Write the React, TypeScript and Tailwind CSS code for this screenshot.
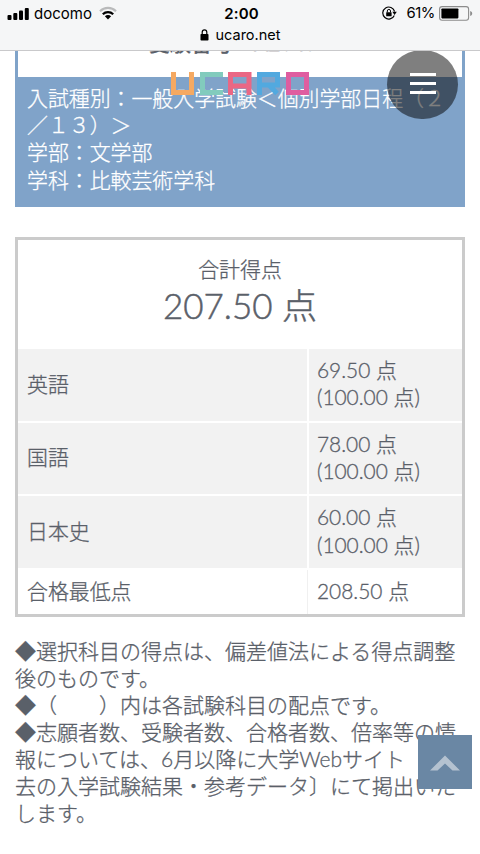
const scores = [
  { subject: "英語", score: "69.50 点", full: "(100.00 点)" },
  { subject: "国語", score: "78.00 点", full: "(100.00 点)" },
  { subject: "日本史", score: "60.00 点", full: "(100.00 点)" },
];

const examInfo = [
  "入試種別：一般入学試験＜個別学部日程（２",
  "／１３）＞",
  "学部：文学部",
  "学科：比較芸術学科",
];

const notes = [
  "◆選択科目の得点は、偏差値法による得点調整",
  "後のものです。",
  "◆（　　）内は各試験科目の配点です。",
  "◆志願者数、受験者数、合格者数、倍率等の情",
  "報については、6月以降に大学Webサイト〔過",
  "去の入学試験結果・参考データ〕にて掲出いた",
  "します。",
];

function StatusBar() {
  return (
    <header className="relative z-10 h-[51px] border-b border-[#c9c9cb] bg-[#f5f6f7] font-['Inter','Noto_Sans_CJK_JP',sans-serif] font-normal text-black [-webkit-text-stroke:0px]">
      <div className="grid h-[26px] grid-cols-3 items-center px-[7px]">
        <div className="flex items-center">
          {/* Signal */}
          <svg width="23" height="14" viewBox="0 0 23 14" className="mt-px">
            <rect x="0.5" y="8" width="4" height="5" rx="1" />
            <rect x="6.3" y="6" width="4" height="7" rx="1" />
            <rect x="12" y="3.5" width="4" height="9.5" rx="1" />
            <rect x="17.8" y="1" width="4" height="12" rx="1" />
          </svg>
          <span className="ml-[4px] text-[15px] leading-none">docomo</span>
          {/* Wifi */}
          <svg width="18" height="14" viewBox="0 0 18 14" className="ml-[7px]" fill="none">
            <path d="M1 5.2a11.5 11.5 0 0 1 16 0" stroke="#b9babb" strokeWidth="2.2" />
            <path d="M3.8 8.2a7.4 7.4 0 0 1 10.4 0" stroke="#000" strokeWidth="2.2" />
            <path d="M5.9 10.3a4.4 4.4 0 0 1 6.2 0L9 13.6z" fill="#000" />
          </svg>
        </div>
        <div className="pl-[3px] text-center text-[15px] leading-none font-semibold tracking-[0.2px]">2:00</div>
        <div className="flex items-center justify-end">
          {/* Orientation lock */}
          <svg width="15" height="14" viewBox="0 0 15 14" fill="none">
            <path d="M12.3 9.4A6 6 0 1 1 12.6 5.5" stroke="#000" strokeWidth="1.2" />
            <path d="M10.3 5.8h4.5l-2.2 3.1z" fill="#000" />
            <rect x="4.2" y="6.2" width="5.4" height="4" rx="0.5" fill="#000" />
            <path d="M5.3 6.4V5a1.6 1.6 0 0 1 3.2 0v1.4" stroke="#000" strokeWidth="1" />
          </svg>
          <span className="ml-[9px] text-[14.8px] leading-none tracking-[-0.4px]">61%</span>
          {/* Battery */}
          <svg width="34" height="15" viewBox="0 0 34 15" className="ml-[4px]">
            <rect x="0.6" y="0.6" width="29" height="13.6" rx="2.5" fill="none" stroke="#8c8c8c" strokeWidth="1.1" />
            <rect x="2.4" y="2.4" width="17" height="10" rx="0.8" />
            <path d="M31.2 5v5c1.4-.4 2-1.4 2-2.5s-.6-2.1-2-2.5z" fill="#8c8c8c" />
          </svg>
        </div>
      </div>
      <div className="flex h-[18px] items-center justify-center gap-[7px]">
        <svg width="9" height="12" viewBox="0 0 9 12" fill="none">
          <rect x="0.5" y="5" width="8" height="6.5" rx="0.8" fill="#000" />
          <path d="M2.2 5.5V3.2a2.3 2.3 0 0 1 4.6 0v2.3" stroke="#000" strokeWidth="1.2" />
        </svg>
        <span className="text-[14.5px] leading-none">ucaro.net</span>
      </div>
    </header>
  );
}

function UcaroLogo() {
  return (
    <svg width="140" height="24" viewBox="0 0 140 24" fill="none" strokeWidth="5" className="absolute left-[171px] top-[72px]">
      <path d="M2.5 0V20.5H20.5V0" stroke="#f5a962" />
      <path d="M52 2.5H31.5V20.5H52" stroke="#82cbbd" />
      <path d="M59.5 23V2.5H78V23M60 14H78" stroke="#ea6784" />
      <path d="M88.5 23V2.5H106.5V13H89M98 13l8 8.5" stroke="#52a9df" />
      <path d="M117.5 2.5H135.5V20.5H117.5Z" stroke="#df5da0" />
    </svg>
  );
}

function MenuButton() {
  return (
    <button className="absolute left-[387px] top-[50px] flex h-[69px] w-[71px] flex-col items-center justify-center gap-[6px] rounded-full bg-black/50 pb-[2px]">
      <span className="h-[3px] w-[26px] bg-white" />
      <span className="h-[3px] w-[26px] bg-white" />
      <span className="h-[3px] w-[26px] bg-white" />
    </button>
  );
}

export default function App() {
  return (
    <div className="relative h-[854px] w-[480px] overflow-hidden bg-white font-['Lato','Noto_Sans_CJK_JP',sans-serif] text-[20.9px] font-light leading-[27.2px] whitespace-nowrap text-[#5a6069] [-webkit-text-stroke:0.3px]">
      <StatusBar />

      {/* Exam information */}
      <section className="mx-[15px] h-[156px] border-x-[3px] border-b-[3px] border-[#80a3c9]">
        <div className="flex h-[26px] flex-col">
          <div className="-mt-[22px] pl-[131px] text-[21px] font-medium">受験番号：A2345</div>
        </div>
        <div className="h-[127px] bg-[#80a3c9] pl-[9px] pt-[7px] text-white">
          {examInfo.map((line) => (
            <div key={line}>{line}</div>
          ))}
        </div>
      </section>

      {/* Scores */}
      <section className="mx-[15px] mt-[30px] h-[380px] border-[3px] border-[#cbcbcb]">
        <div className="h-[109px] pt-[15px] text-center">
          <div>合計得点</div>
          <div className="mt-[1px] text-[35px] leading-[44px] [-webkit-text-stroke:0.5px]">207.50 点</div>
        </div>
        {scores.map((row) => (
          <div key={row.subject} className="mb-[2px] grid h-[71.7px] grid-cols-[289px_1fr] gap-[2px]">
            <div className="flex items-center bg-[#f2f2f2] pb-[3px] pl-[9px]">{row.subject}</div>
            <div className="bg-[#f2f2f2] pl-[8px] pt-[7px]">
              <div>{row.score}</div>
              <div>{row.full}</div>
            </div>
          </div>
        ))}
        <div className="grid h-[44px] grid-cols-[289px_1fr] items-stretch">
          <div className="flex items-center pb-[2px] pl-[9px]">合格最低点</div>
          <div className="flex items-center border-l border-[#f0f0f0] pb-[2px] pl-[9px]">208.50 点</div>
        </div>
      </section>

      {/* Notes */}
      <section className="ml-[15px] mt-[20px] text-[21px] leading-[27px]">
        {notes.map((line) => (
          <p key={line}>{line}</p>
        ))}
      </section>

      <UcaroLogo />
      <MenuButton />

      {/* Back to top */}
      <button className="absolute left-[418px] top-[735px] flex h-[54px] w-[54px] items-center justify-center bg-[#6a87a4]">
        <svg width="32" height="16" viewBox="0 0 32 16" className="mt-[1px]">
          <path d="M1 15.5L16 0.5L31 15.5H23.5L16 8.5L8.5 15.5Z" fill="#b4c2d0" />
        </svg>
      </button>
    </div>
  );
}
